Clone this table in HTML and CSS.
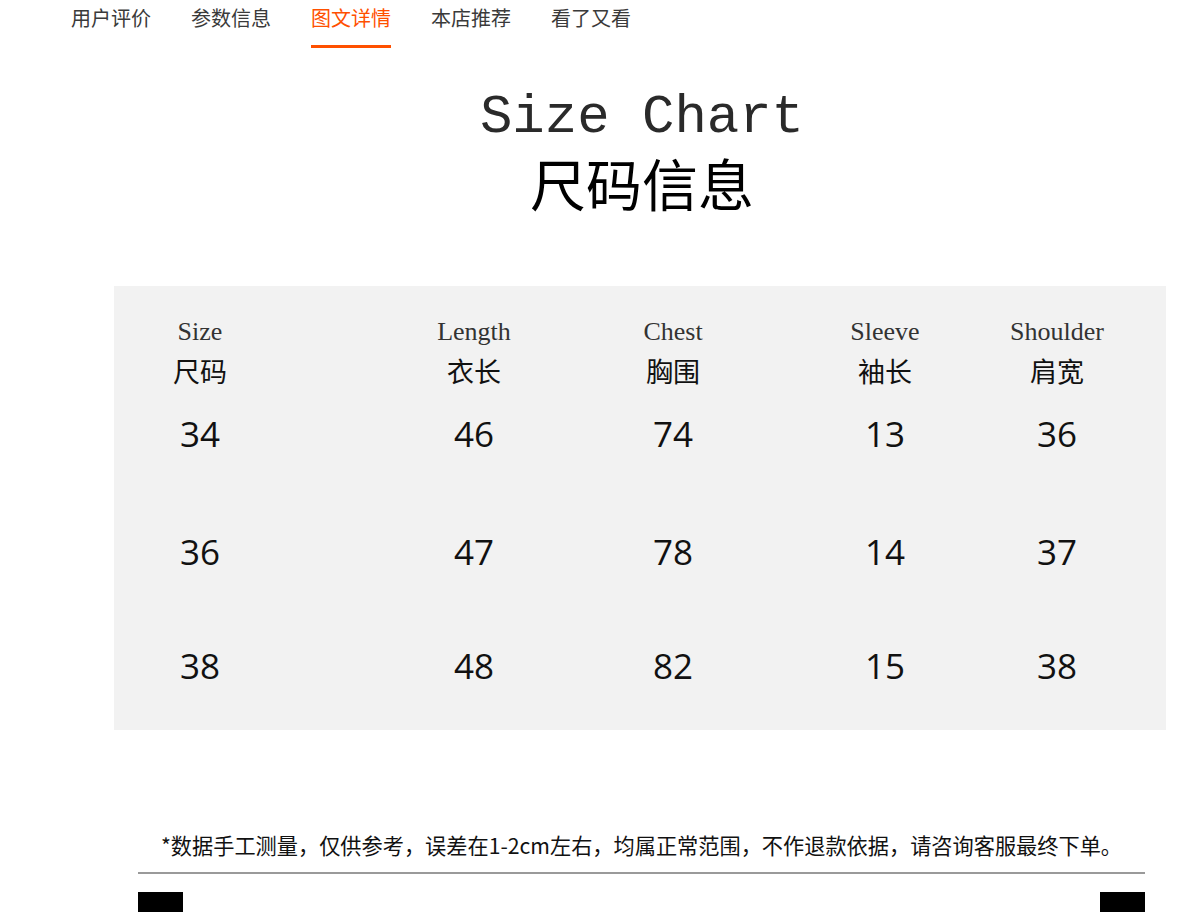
FILE: index.html
```html
<!DOCTYPE html>
<html lang="zh-CN">
<head>
<meta charset="utf-8">
<title>Size Chart 尺码信息</title>
<link rel="stylesheet" href="styles.css">
</head>
<body>
<nav class="tabs">
  <a class="tab">用户评价</a>
  <a class="tab">参数信息</a>
  <a class="tab active">图文详情</a>
  <a class="tab">本店推荐</a>
  <a class="tab">看了又看</a>
</nav>
<main class="page">
  <header class="title">
    <div class="title-en">Size Chart</div>
    <div class="title-cn">尺码信息</div>
  </header>
  <section class="chart">
    <div class="grid head-en">
      <span class="c1">Size</span><span class="c2">Length</span><span class="c3">Chest</span><span class="c4">Sleeve</span><span class="c5">Shoulder</span>
    </div>
    <div class="grid head-cn">
      <span class="c1">尺码</span><span class="c2">衣长</span><span class="c3">胸围</span><span class="c4">袖长</span><span class="c5">肩宽</span>
    </div>
    <div class="rows">
      <div class="grid num">
        <span class="c1">34</span><span class="c2">46</span><span class="c3">74</span><span class="c4">13</span><span class="c5">36</span>
      </div>
      <div class="grid num row2">
        <span class="c1">36</span><span class="c2">47</span><span class="c3">78</span><span class="c4">14</span><span class="c5">37</span>
      </div>
      <div class="grid num row3">
        <span class="c1">38</span><span class="c2">48</span><span class="c3">82</span><span class="c4">15</span><span class="c5">38</span>
      </div>
    </div>
  </section>
  <footer class="note">
    <p class="note-text">*数据手工测量，仅供参考，误差在1-2cm左右，均属正常范围，不作退款依据，请咨询客服最终下单。</p>
    <div class="rule"></div>
    <div class="marks"><span class="mark"></span><span class="mark"></span></div>
  </footer>
</main>
</body>
</html>
```

FILE: styles.css
```css
html, body {
  margin: 0;
  padding: 0;
  background: #ffffff;
  overflow: hidden;
}

body {
  width: 1202px;
  height: 916px;
  font-family: "Noto Sans CJK SC", "Noto Sans", sans-serif;
  color: #111;
}

.tabs {
  display: flex;
  gap: 40px;
  padding: 4px 0 0 71px;
  height: 44px;
}

.tab {
  display: block;
  width: 80px;
  font-size: 20px;
  line-height: 28px;
  color: #3a3a3a;
  padding-bottom: 13px;
  border-bottom: 3px solid transparent;
  white-space: nowrap;
}

.tab.active {
  color: #ff5000;
  border-bottom-color: #ff5000;
}

.page {
  width: 1052px;
  margin-left: 114px;
}

.title {
  width: 1056px;
  padding-top: 44px;
  text-align: center;
}

.title-en {
  font-family: "Liberation Mono", "Courier New", monospace;
  font-size: 54px;
  line-height: 52px;
  color: #2a2a2a;
}

.title-cn {
  margin-top: 10px;
  font-size: 56px;
  line-height: 56px;
  color: #000;
}

.chart {
  margin-top: 76px;
  background: #f2f2f2;
  height: 444px;
  padding-top: 31px;
  box-sizing: border-box;
}

.grid {
  display: grid;
  grid-template-columns: 16px 140px 134px 140px 59px 140px 72px 140px 32px 140px;
  text-align: center;
  white-space: nowrap;
}

.c1 { grid-column: 2; }
.c2 { grid-column: 4; }
.c3 { grid-column: 6; }
.c4 { grid-column: 8; }
.c5 { grid-column: 10; }

.head-en {
  font-family: "Liberation Serif", "Times New Roman", serif;
  font-size: 26px;
  line-height: 30px;
  color: #333;
}

.head-cn {
  margin-top: 7px;
  font-size: 27px;
  line-height: 34px;
  color: #111;
}

.rows {
  margin-top: 26px;
  display: flex;
  flex-direction: column;
}

.num {
  font-family: "Open Sans", "Noto Sans", sans-serif;
  font-size: 35px;
  line-height: 40px;
  color: #111;
}

.row2 { margin-top: 78px; }
.row3 { margin-top: 74px; }

.note {
  margin-top: 100px;
  margin-left: 24px;
  width: 1007px;
}

.note-text {
  margin: 0;
  text-align: center;
  font-size: 21.2px;
  line-height: 30px;
  color: #111;
  white-space: nowrap;
}

.rule {
  margin-top: 12px;
  height: 2px;
  background: #9a9a9a;
}

.marks {
  display: flex;
  justify-content: space-between;
  margin-top: 18px;
}

.mark {
  display: block;
  width: 45px;
  height: 20px;
  background: #000;
}
```
